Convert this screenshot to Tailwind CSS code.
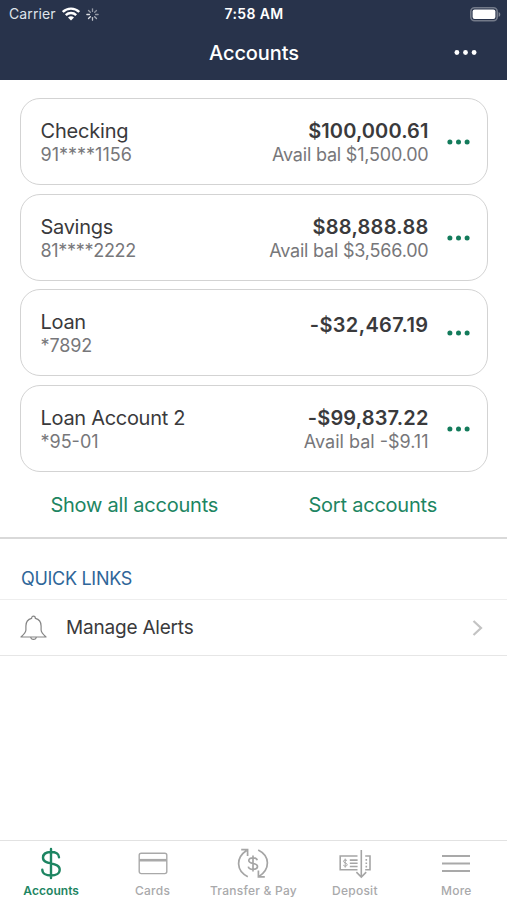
<!DOCTYPE html>
<html lang="en">
<head>
    <meta charset="UTF-8">
    <meta name="viewport" content="width=device-width, initial-scale=1.0">
    <title>Accounts</title>
    <script src="https://cdn.jsdelivr.net/npm/@tailwindcss/browser@4"></script>
</head>
<body class="bg-white font-['Inter',sans-serif] text-[#3a3a3c]">
    <div class="flex h-[900px] w-[507px] flex-col overflow-hidden">
        <!-- Status bar and title -->
        <header class="h-20 shrink-0 bg-[#28334b] text-white">
            <div class="grid h-7 grid-cols-3 items-center pl-[8px] pr-[7px]">
                <div class="flex items-center text-[#dfe3ea]">
                    <span class="pl-px text-[14px] leading-5 tracking-[0.1px]">Carrier</span>
                    <svg class="ml-[6px]" width="18" height="14" viewBox="0 0 18 14" fill="none" stroke="#fff" stroke-width="2.4">
                        <path d="M.8 5a11.6 11.6 0 0 1 16.4 0M3.8 8.2a7.4 7.4 0 0 1 10.4 0"/>
                        <path d="M9 13.6 6 10.6a4.3 4.3 0 0 1 6 0z" fill="#fff" stroke="none"/>
                    </svg>
                    <svg class="ml-[6px]" width="13" height="13" viewBox="0 0 12 12" stroke="#fff" stroke-width="1.2" stroke-linecap="round">
                        <path d="M6 .8v2.4" opacity=".5"/>
                        <path d="M9.7 2.3 8 4" opacity=".45"/>
                        <path d="M11.2 6H8.8" opacity=".5"/>
                        <path d="M9.7 9.7 8 8" opacity=".6"/>
                        <path d="M6 11.2V8.8" opacity=".7"/>
                        <path d="M2.3 9.7 4 8" opacity=".85"/>
                        <path d="M.8 6h2.4" opacity=".85"/>
                        <path d="M2.3 2.3 4 4" opacity=".5"/>
                    </svg>
                </div>
                <span class="text-center text-[14px] font-semibold leading-5 tracking-[0.35px]">7:58 AM</span>
                <svg class="-mr-px justify-self-end" width="31" height="15" viewBox="0 0 31 15">
                    <rect x=".8" y=".8" width="26.4" height="13" rx="3.8" fill="none" stroke="#fff" stroke-opacity=".35" stroke-width="1.6"/>
                    <rect x="2.6" y="2.6" width="22.8" height="9.4" rx="2" fill="#fff"/>
                    <path d="M28.6 5v4.8c1.1-.5 1.7-1.4 1.7-2.4s-.6-1.9-1.7-2.4z" fill="#fff" fill-opacity=".4"/>
                </svg>
            </div>
            <div class="grid h-[50px] grid-cols-[1fr_auto_1fr] items-center pr-[30px]">
                <span class="w-[30px]"></span>
                <h1 class="pl-[31px] text-[20px] font-medium leading-6 tracking-[-0.1px]">Accounts</h1>
                <svg class="justify-self-end" width="23" height="6" viewBox="0 0 23 6" fill="#fff">
                    <circle cx="2.9" cy="2.5" r="2.4"/><circle cx="11.5" cy="2.5" r="2.4"/><circle cx="20.1" cy="2.5" r="2.4"/>
                </svg>
            </div>
        </header>

        <!-- Account cards -->
        <section class="shrink-0 pl-5 pr-[19px] pt-[18px]">
            <div class="flex flex-col gap-[8.7px]">
                <div class="flex h-[87px] rounded-[20px] border-[1.5px] border-[#d3d3d3] pl-[19.5px] pr-[17.5px] pt-[20px]">
                    <div class="flex-1">
                        <p class="text-[20px] leading-6 tracking-[-0.2px]">Checking</p>
                        <p class="text-[18px] leading-[23px] text-[#77777a]">91****1156</p>
                    </div>
                    <div class="text-right">
                        <p class="text-[20px] font-semibold leading-6 tracking-[0.1px]">$100,000.61</p>
                        <p class="text-[18px] leading-[23px] tracking-[-0.2px] text-[#77777a]">Avail bal $1,500.00</p>
                    </div>
                    <svg class="ml-[18px] mt-[20px]" width="23" height="6" viewBox="0 0 23 6" fill="#137b5b">
                        <circle cx="2.9" cy="3" r="2.5"/><circle cx="11.5" cy="3" r="2.5"/><circle cx="20.1" cy="3" r="2.5"/>
                    </svg>
                </div>
                <div class="flex h-[87px] rounded-[20px] border-[1.5px] border-[#d3d3d3] pl-[19.5px] pr-[17.5px] pt-[20px]">
                    <div class="flex-1">
                        <p class="text-[20px] leading-6 tracking-[-0.3px]">Savings</p>
                        <p class="text-[18px] leading-[23px] tracking-[-0.3px] text-[#77777a]">81****2222</p>
                    </div>
                    <div class="text-right">
                        <p class="text-[20px] font-semibold leading-6 tracking-[0.25px]">$88,888.88</p>
                        <p class="text-[18px] leading-[23px] tracking-[-0.2px] text-[#77777a]">Avail bal $3,566.00</p>
                    </div>
                    <svg class="ml-[18px] mt-[20px]" width="23" height="6" viewBox="0 0 23 6" fill="#137b5b">
                        <circle cx="2.9" cy="3" r="2.5"/><circle cx="11.5" cy="3" r="2.5"/><circle cx="20.1" cy="3" r="2.5"/>
                    </svg>
                </div>
                <div class="flex h-[87px] rounded-[20px] border-[1.5px] border-[#d3d3d3] pl-[19.5px] pr-[17.5px] pt-[20px]">
                    <div class="flex-1">
                        <p class="text-[20px] leading-6 tracking-[-0.3px]">Loan</p>
                        <p class="text-[18px] leading-[23px] tracking-[-0.1px] text-[#77777a]">*7892</p>
                    </div>
                    <div class="pt-[3px] text-right">
                        <p class="text-[20px] font-semibold leading-6 tracking-[0.35px]">-$32,467.19</p>
                    </div>
                    <svg class="ml-[18px] mt-[20px]" width="23" height="6" viewBox="0 0 23 6" fill="#137b5b">
                        <circle cx="2.9" cy="3" r="2.5"/><circle cx="11.5" cy="3" r="2.5"/><circle cx="20.1" cy="3" r="2.5"/>
                    </svg>
                </div>
                <div class="flex h-[87px] rounded-[20px] border-[1.5px] border-[#d3d3d3] pl-[19.5px] pr-[17.5px] pt-[20px]">
                    <div class="flex-1">
                        <p class="text-[20px] leading-6 tracking-[-0.3px]">Loan Account 2</p>
                        <p class="text-[18px] leading-[23px] text-[#77777a]">*95-01</p>
                    </div>
                    <div class="text-right">
                        <p class="text-[20px] font-semibold leading-6 tracking-[0.15px]">-$99,837.22</p>
                        <p class="text-[18px] leading-[23px] text-[#77777a]">Avail bal -$9.11</p>
                    </div>
                    <svg class="ml-[18px] mt-[20px]" width="23" height="6" viewBox="0 0 23 6" fill="#137b5b">
                        <circle cx="2.9" cy="3" r="2.5"/><circle cx="11.5" cy="3" r="2.5"/><circle cx="20.1" cy="3" r="2.5"/>
                    </svg>
                </div>
            </div>
        </section>
        <div class="grid h-[67px] shrink-0 grid-cols-2 border-b-2 border-[#d9d9d9] px-[15px] pt-[21px] text-center text-[20px] leading-6 tracking-[-0.22px] text-[#1d8562]">
            <a>Show all accounts</a>
            <a>Sort accounts</a>
        </div>

        <!-- Quick links -->
        <section class="flex-1">
            <h2 class="h-[61px] border-b border-[#eeeeee] pl-[21px] pt-[29px] text-[18px] leading-[22px] tracking-[-0.3px] text-[#2f6699]">QUICK LINKS</h2>
            <div class="flex h-14 items-center border-b border-[#e6e6e6] pl-5 pr-6">
                <svg width="27" height="26" viewBox="0 0 27 26" fill="none" stroke="#858585" stroke-width="1.2" stroke-linejoin="round">
                    <path d="M11.6 3.4C11.6 .3 15.4 .3 15.4 3.4 19.5 4.4 21.1 7.5 21.1 11v4.1c0 2.7 1.8 4.2 4.9 6.9H1C4.1 19.3 5.9 17.8 5.9 15.1V11c0-3.5 1.6-6.6 5.7-7.6z"/>
                    <path d="M10.7 22c.4 3.2 5.2 3.2 5.6 0"/>
                </svg>
                <span class="ml-[19px] mt-px flex-1 text-[19px] leading-6 tracking-[-0.2px]">Manage Alerts</span>
                <svg width="11" height="16" viewBox="0 0 11 16" fill="none" stroke="#c3c3c3" stroke-width="2.2"><path d="m1.5 1 7.5 7-7.5 7"/></svg>
            </div>
        </section>

        <!-- Tab bar -->
        <nav class="grid h-[60px] shrink-0 grid-cols-5 border-t border-[#e2e2e2] text-center text-[12px] font-medium leading-4 tracking-[0.25px] text-[#a9a9ab]">
            <div class="flex flex-col items-center pl-px pt-[6px]">
                <svg width="22" height="33" viewBox="0 0 22 33" fill="none" stroke="#1d8562" stroke-width="2.4" stroke-linecap="round">
                    <path d="M11 2v29M19 10.2C19 6.7 15.7 5 11 5S3 7 3 10.7c0 3.9 3.8 4.8 8 5.7s8.7 2 8.7 6.3c0 3.8-3.8 5.8-8.7 5.8s-8.7-2-8.7-5.8"/>
                </svg>
                <span class="mt-[3px] font-semibold tracking-[0.05px] text-[#1d8562]">Accounts</span>
            </div>
            <div class="flex flex-col items-center pl-px pt-[6px]">
                <svg width="30" height="33" viewBox="0 0 30 33" fill="none" stroke="#a9a9a9" stroke-width="1.4">
                    <rect x="1.2" y="6.2" width="27.6" height="20.4" rx="2"/>
                    <path d="M1.2 13.2h27.6" stroke-width="2.6"/>
                </svg>
                <span class="mt-[3px]">Cards</span>
            </div>
            <div class="flex flex-col items-center whitespace-nowrap pt-[6px]">
                <svg width="32" height="33" viewBox="0 0 32 33" fill="none" stroke="#a5a5a5" stroke-width="1.7">
                    <path d="M10.8 29.7C-1.2 23.7-1.2 10.7 9.5 3.5M4.2 2.6h6.4v6.3M21.2 2.9c12 6 12 19 1.3 26.2M27.8 29.8h-6.4v-6.3"/>
                    <path d="M16 8.5v16M20.2 13.3c-.4-1.8-2-2.4-4.2-2.4-2.5 0-4.2.9-4.2 2.7 0 4.1 8.7 1.7 8.7 5.9 0 1.9-1.8 2.9-4.5 2.9-2.5 0-4.3-.8-4.7-2.8"/>
                </svg>
                <span class="mt-[3px]">Transfer &amp; Pay</span>
            </div>
            <div class="flex flex-col items-center pt-[6px]">
                <svg width="32" height="33" viewBox="0 0 32 33" fill="none" stroke="#a5a5a5" stroke-width="1.6">
                    <path d="M18.5 9H1.2v13.8h17.3M26.2 9H31v13.8h-4.8M22.3 3v27M17.4 25.1l4.9 4.9 4.9-4.9M10.8 13.1h7.8M10.8 16.3h7.8M10.8 19.5h7.8"/>
                    <path d="M27.3 12.1v1.7M27.3 15.4v1.7M27.3 18.7v1.7"/>
                    <path d="M6.2 11.6v9M8 13.7c-.6-1.1-3.5-1.1-3.5.6s3.7 1.5 3.7 3.4-3.2 1.8-3.9.5" stroke-width="1"/>
                </svg>
                <span class="mt-[3px]">Deposit</span>
            </div>
            <div class="flex flex-col items-center pt-[6px]">
                <svg width="30" height="33" viewBox="0 0 30 33" stroke="#a9a9a9" stroke-width="1.8"><path d="M1 9h28M1 16.5h28M1 24h28"/></svg>
                <span class="mt-[3px]">More</span>
            </div>
        </nav>
    </div>
</body>
</html>
